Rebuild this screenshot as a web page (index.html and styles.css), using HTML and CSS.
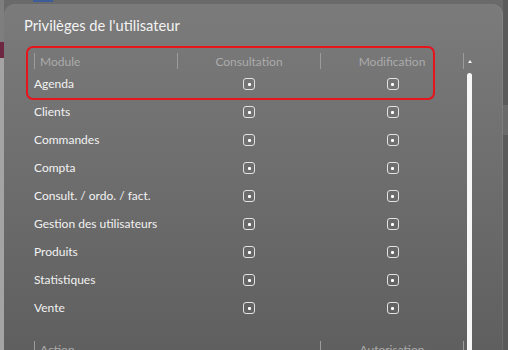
FILE: index.html
```html
<!DOCTYPE html>
<html lang="fr">
<head>
<meta charset="utf-8">
<title>Privilèges de l'utilisateur</title>
<link rel="stylesheet" href="styles.css">
</head>
<body>
<div class="app-left">
  <div class="app-tab"></div>
</div>
<div class="dialog-wrap">
  <div class="app-top"><span class="app-top-bar"></span></div>
  <div class="dialog">
    <h1 class="title">Privilèges de l'utilisateur</h1>
    <div class="body">
      <div class="content">
        <div class="thead">
          <div class="th th-left">Module</div>
          <div class="th">Consultation</div>
          <div class="th">Modification</div>
          <div class="th-end"></div>
        </div>
        <div class="row"><span class="label">Agenda</span><span class="cell"><i class="chk"></i></span><span class="cell"><i class="chk"></i></span></div>
        <div class="row"><span class="label">Clients</span><span class="cell"><i class="chk"></i></span><span class="cell"><i class="chk"></i></span></div>
        <div class="row"><span class="label">Commandes</span><span class="cell"><i class="chk"></i></span><span class="cell"><i class="chk"></i></span></div>
        <div class="row"><span class="label">Compta</span><span class="cell"><i class="chk"></i></span><span class="cell"><i class="chk"></i></span></div>
        <div class="row"><span class="label">Consult. / ordo. / fact.</span><span class="cell"><i class="chk"></i></span><span class="cell"><i class="chk"></i></span></div>
        <div class="row"><span class="label">Gestion des utilisateurs</span><span class="cell"><i class="chk"></i></span><span class="cell"><i class="chk"></i></span></div>
        <div class="row"><span class="label">Produits</span><span class="cell"><i class="chk"></i></span><span class="cell"><i class="chk"></i></span></div>
        <div class="row"><span class="label">Statistiques</span><span class="cell"><i class="chk"></i></span><span class="cell"><i class="chk"></i></span></div>
        <div class="row"><span class="label">Vente</span><span class="cell"><i class="chk"></i></span><span class="cell"><i class="chk"></i></span></div>
        <div class="thead thead-actions">
          <div class="th th-left th-wide">Action</div>
          <div class="th">Autorisation</div>
          <div class="th-end"></div>
        </div>
        <div class="highlight"></div>
      </div>
      <div class="scrollbar">
        <span class="arrow"></span>
        <span class="thumb"></span>
      </div>
    </div>
  </div>
</div>
<div class="app-right">
  <span class="app-right-block"></span>
</div>
</body>
</html>
```

FILE: styles.css
```css
html, body {
  margin: 0;
  padding: 0;
}
body {
  width: 508px;
  height: 350px;
  overflow: hidden;
  display: flex;
  background: #6a6a6a;
  font-family: "Lato", "Open Sans", sans-serif;
}
.app-left {
  width: 4px;
  flex: none;
  background: #a4a4a4;
  padding-top: 42px;
  box-sizing: border-box;
}
.app-left::before {
  content: "";
  display: block;
  height: 42px;
  margin-top: -42px;
  background: #7e7e7e;
}
.app-tab {
  height: 16px;
  background: #6e2740;
}
.dialog-wrap {
  width: 499px;
  flex: none;
  display: flex;
  flex-direction: column;
}
.app-top {
  height: 4px;
  flex: none;
  padding-left: 29px;
}
.app-top-bar {
  display: block;
  width: 20px;
  height: 2px;
  background: #3b5e9a;
}
.dialog {
  flex: 1;
  border-radius: 11px 11px 0 0;
  background: linear-gradient(180deg, #7b7b7b 0%, #6c6c6c 55%, #5f5f5f 100%);
  box-shadow: inset -1px 0 0 rgba(255,255,255,0.08);
  padding: 10px 0 0 20px;
  overflow: hidden;
}
.title {
  margin: 0;
  font-size: 14.7px;
  line-height: 22px;
  font-weight: 400;
  color: #f3f3f3;
}
.body {
  display: flex;
  margin-top: 12px;
  margin-left: 10px;
}
.content {
  width: 430px;
  position: relative;
}
.thead {
  display: flex;
  height: 22px;
  align-items: flex-end;
}
.th {
  width: 142px;
  height: 16px;
  margin-bottom: 1px;
  border-left: 1px solid #9c9c9c;
  color: #ababab;
  font-size: 12px;
  line-height: 17px;
  text-align: center;
}
.th-left {
  text-align: left;
  padding-left: 5px;
  width: 137px;
}
.th-wide {
  width: 280px;
}
.th-end {
  width: 0;
  height: 16px;
  margin-bottom: 1px;
  border-left: 1px solid #9c9c9c;
}
.thead-actions {
  margin-top: 14px;
}
.row {
  display: flex;
  height: 28px;
  align-items: center;
}
.label {
  width: 143px;
  color: #f2f2f2;
  font-size: 12px;
  line-height: 16px;
}
.cell {
  width: 143px;
  display: flex;
  justify-content: center;
  padding-left: 1px;
}
.chk {
  width: 12px;
  height: 12px;
  box-sizing: border-box;
  border: 1.5px solid #e2e2e2;
  border-radius: 3px;
  display: flex;
  align-items: center;
  justify-content: center;
}
.chk::after {
  content: "";
  width: 3px;
  height: 3px;
  border-radius: 1px;
  background: #ffffff;
}
.highlight {
  position: absolute;
  left: -8px;
  top: -2px;
  width: 409px;
  height: 54px;
  box-sizing: border-box;
  border: 2px solid #e8141b;
  border-radius: 7px;
}
.scrollbar {
  margin-left: 3px;
  width: 5px;
  display: flex;
  flex-direction: column;
  align-items: center;
}
.arrow {
  margin-top: 12px;
  width: 0;
  height: 0;
  border-left: 2.5px solid transparent;
  border-right: 2.5px solid transparent;
  border-bottom: 3px solid #f4f4f4;
}
.thumb {
  margin-top: 10px;
  width: 5px;
  height: 300px;
  border-radius: 3px 3px 0 0;
  background: #f7f7f7;
}
.app-right {
  flex: 1;
  background: #5a5a5a;
  padding-top: 105px;
  box-sizing: border-box;
}
.app-right-block {
  display: block;
  height: 30px;
  background: #6a6a6a;
}
```
